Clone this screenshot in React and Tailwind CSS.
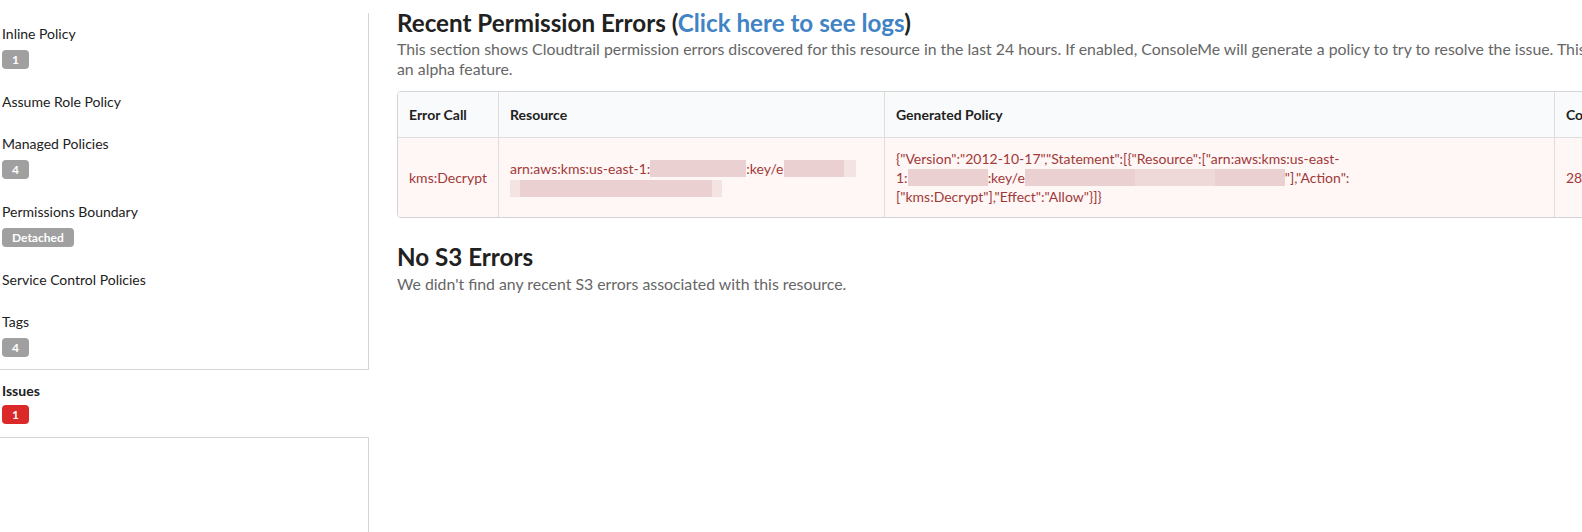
const FONT = { fontFamily: "Lato, 'Open Sans', sans-serif" };

const menuItems = [
  { name: "Inline Policy", count: "1" },
  { name: "Assume Role Policy" },
  { name: "Managed Policies", count: "4" },
  { name: "Permissions Boundary", count: "Detached" },
  { name: "Service Control Policies" },
  { name: "Tags", count: "4" },
];

function Label({ children, red, className = "mt-[7px]" }) {
  return (
    <span
      className={`inline-block self-start h-[19px] leading-[19px] px-[10px] rounded-[4px] text-[12px] font-bold text-white ${className} ${
        red ? "bg-[#db2828]" : "bg-[#a0a0a0]"
      }`}
    >
      {children}
    </span>
  );
}

function MenuItem({ item }) {
  return (
    <div className="flex flex-col pl-[2px] py-3">
      <span className="text-[14px] leading-[18px] text-[#212121]">{item.name}</span>
      {item.count && <Label>{item.count}</Label>}
    </div>
  );
}

// redacted chunk of an ARN
function Blur({ w, tone = "a" }) {
  const tones = {
    a: "bg-[#ead0d0]",
    b: "bg-[#eed8d8]",
    c: "bg-[#f3e3e3]",
  };
  return <span className={`inline-block align-middle h-[17px] ${tones[tone]}`} style={{ width: w }} />;
}

function Sidebar() {
  return (
    <div className="w-[369px] shrink-0 flex flex-col pt-[13px]">
      <div className="border-r border-b border-[#d4d4d5]">
        {menuItems.map((m) => (
          <MenuItem key={m.name} item={m} />
        ))}
      </div>
      <div className="flex flex-col pl-[2px] pt-[12px] pb-[13px]">
        <span className="text-[14px] leading-[18px] font-bold text-[#212121]">Issues</span>
        <Label red className="mt-[5px]">
          1
        </Label>
      </div>
      <div className="flex-1 border-t border-r border-[#d4d4d5]" />
    </div>
  );
}

function ErrorsTable() {
  return (
    <div className="mt-[12px] w-[1300px] border border-[#d4d4d5] rounded-[4px] overflow-hidden text-[14px] leading-[19px]">
      <div className="flex bg-[#f9fafb] border-b border-[#dededf] font-bold text-[#212121]">
        <div className="w-[100px] px-[11px] py-[13px]">Error Call</div>
        <div className="w-[386px] px-[11px] py-[13px] border-l border-[#dededf]">Resource</div>
        <div className="w-[670px] px-[11px] py-[13px] border-l border-[#dededf]">Generated Policy</div>
        <div className="flex-1 px-[11px] py-[13px] border-l border-[#dededf]">Count</div>
      </div>
      <div className="flex bg-[#fff6f6] text-[#9f3a38] h-[79px]">
        <div className="w-[100px] px-[11px] flex items-center">kms:Decrypt</div>
        <div className="w-[386px] px-[11px] flex flex-col justify-center gap-[2px] border-l border-[#dededf]">
          <div className="flex items-center whitespace-nowrap">
            arn:aws:kms:us-east-1:
            <Blur w={96} />
            :key/e
            <Blur w={60} />
            <Blur w={12} tone="c" />
          </div>
          <div className="flex items-center">
            <Blur w={10} tone="c" />
            <Blur w={192} />
            <Blur w={10} tone="c" />
          </div>
        </div>
        <div className="w-[670px] px-[11px] flex flex-col justify-center border-l border-[#dededf] whitespace-nowrap">
          <div>{'{"Version":"2012-10-17","Statement":[{"Resource":["arn:aws:kms:us-east-'}</div>
          <div className="flex items-center">
            1:
            <Blur w={80} />
            :key/e
            <Blur w={110} />
            <Blur w={80} tone="b" />
            <Blur w={70} />
            {'"],"Action":'}
          </div>
          <div>{'["kms:Decrypt"],"Effect":"Allow"}]}'}</div>
        </div>
        <div className="flex-1 px-[11px] flex items-center border-l border-[#dededf]">28</div>
      </div>
    </div>
  );
}

export default function App() {
  return (
    <div className="w-[1582px] h-[532px] overflow-hidden bg-white flex" style={FONT}>
      <Sidebar />
      <div className="pl-[28px] pt-[8px] w-[1400px] shrink-0">
        <h2 className="text-[24.2px] leading-[30px] font-bold text-[#212121]">
          Recent Permission Errors (<span className="text-[#4183c4]">Click here to see logs</span>)
        </h2>
        <p className="text-[15.85px] leading-[20px] pt-px text-[#666666]">
          <span className="whitespace-nowrap">
            This section shows Cloudtrail permission errors discovered for this resource in the last 24 hours. If
            enabled, ConsoleMe will generate a policy to try to resolve the issue. This is
          </span>
          <br />
          an alpha feature.
        </p>
        <ErrorsTable />
        <h2 className="mt-[24px] text-[24.2px] leading-[30px] font-bold text-[#212121]">No S3 Errors</h2>
        <p className="text-[15.85px] leading-[20px] pt-[2px] text-[#666666]">
          We didn't find any recent S3 errors associated with this resource.
        </p>
      </div>
    </div>
  );
}
